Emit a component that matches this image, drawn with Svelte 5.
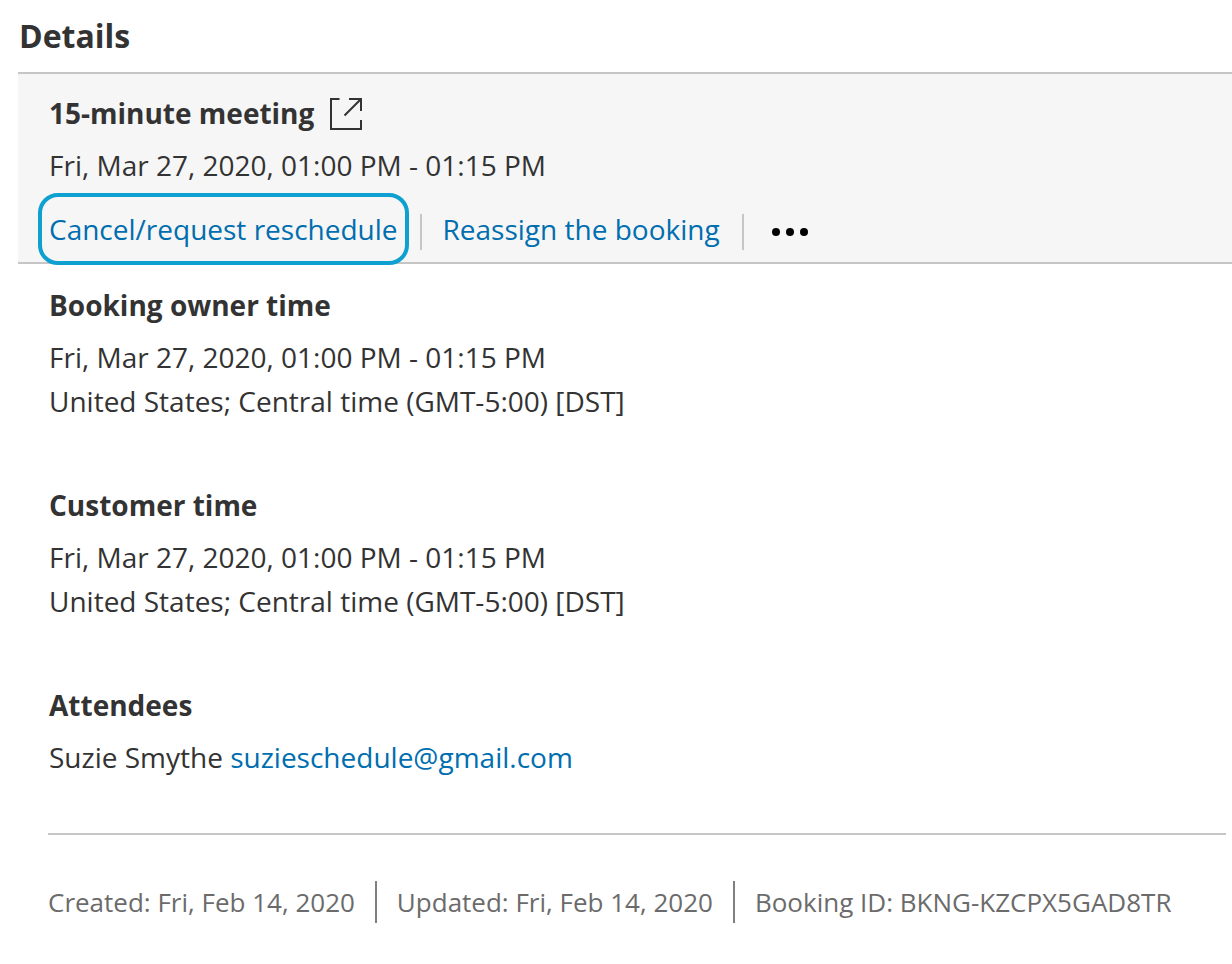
<script lang="ts">
  const slot = 'Fri, Mar 27, 2020, 01:00 PM - 01:15 PM';
  const zone = 'United States; Central time (GMT-5:00) [DST]';

  const times = [
    { title: 'Booking owner time', slot, zone },
    { title: 'Customer time', slot, zone }
  ];

  const attendees = [{ name: 'Suzie Smythe', email: 'suzieschedule@gmail.com' }];

  const meta = [
    'Created: Fri, Feb 14, 2020',
    'Updated: Fri, Feb 14, 2020',
    'Booking ID: BKNG-KZCPX5GAD8TR'
  ];
</script>

<main class="details">
  <h1>Details</h1>

  <section class="summary">
    <h2>
      15-minute meeting
      <a class="open" href="#meeting" aria-label="Open meeting">
        <svg viewBox="0 0 34 34" width="34" height="34" fill="none" stroke="#333" stroke-width="2">
          <path d="M10.500 3H2v30h30v-9" />
          <path d="M15.500 19.500L32 3M20 3h12v12" />
        </svg>
      </a>
    </h2>
    <p>{slot}</p>
    <div class="actions">
      <button class="action focused" type="button">Cancel/request reschedule</button>
      <button class="action" type="button">Reassign the booking</button>
      <button class="more" type="button" aria-label="More actions">
        <svg viewBox="0 0 38 16" width="38" height="16" fill="#000">
          <circle cx="5" cy="11" r="4" />
          <circle cx="19" cy="11" r="4" />
          <circle cx="33" cy="11" r="4" />
        </svg>
      </button>
    </div>
  </section>

  {#each times as time}
    <section class="block">
      <h2>{time.title}</h2>
      <p>{time.slot}</p>
      <p>{time.zone}</p>
    </section>
  {/each}

  <section class="block">
    <h2>Attendees</h2>
    {#each attendees as person}
      <p>{person.name} <a href={`mailto:${person.email}`}>{person.email}</a></p>
    {/each}
  </section>

  <footer>
    {#each meta as item}
      <span>{item}</span>
    {/each}
  </footer>
</main>

<style>
  :global(body) {
    background: #fff;
  }

  .details {
    padding: 16px 0 40px 18px;
    color: #333;
    font-family: 'Open Sans', 'Noto Sans', sans-serif;
    font-size: 28px;
    line-height: 44px;
  }

  h1,
  h2,
  p {
    margin: 0;
  }

  h1 {
    padding: 0 1px 16px;
    font-size: 32px;
    line-height: 40px;
  }

  h2 {
    display: flex;
    align-items: center;
    gap: 15px;
    margin-bottom: 8px;
    font-size: 28px;
    line-height: 44px;
  }

  a {
    color: #006eaf;
    text-decoration: none;
  }

  .open {
    display: flex;
  }

  .summary {
    padding: 17px 31px 0;
    border-top: 2px solid #c6c6c6;
    border-bottom: 2px solid #c6c6c6;
    background: #f6f6f6;
  }

  /* the focus ring hangs over the bottom border */
  .actions {
    display: flex;
    align-items: center;
    margin: 6px 0 -3px -11px;
  }

  button {
    position: relative;
    border: 0;
    background: none;
    color: #006eaf;
    font: inherit;
    cursor: pointer;
  }

  .action {
    padding: 14px 22px 14px 23px;
  }

  .action.focused {
    margin-right: 11px;
    padding: 10px 7px;
    border: 4px solid #0ea0d0;
    border-radius: 20px;
  }

  .more {
    display: flex;
    padding: 14px 29px;
  }

  button + button::before {
    content: '';
    position: absolute;
    left: 0;
    top: 50%;
    height: 36px;
    margin-top: -15px;
    border-left: 2px solid #c6c6c6;
  }

  .block {
    padding: 19px 31px 41px;
  }

  footer {
    display: flex;
    margin: 13px 6px 0 30px;
    padding-top: 46px;
    border-top: 2px solid #c6c6c6;
    color: #6b6b6b;
    font-size: 26px;
    line-height: 42px;
    white-space: nowrap;
  }

  footer span + span {
    margin-left: 20px;
    padding-left: 20px;
    border-left: 2px solid #808080;
  }
</style>
